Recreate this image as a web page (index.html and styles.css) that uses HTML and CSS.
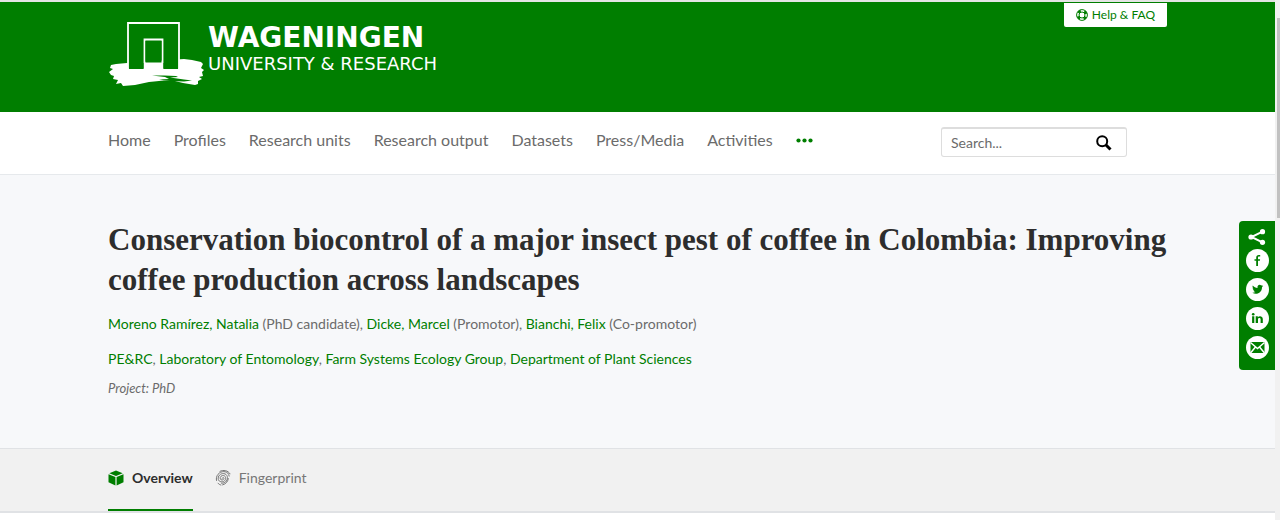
FILE: index.html
```html
<!DOCTYPE html>
<html lang="en">
<head>
<meta charset="utf-8">
<meta name="viewport" content="width=device-width, initial-scale=1">
<title>Conservation biocontrol of a major insect pest of coffee in Colombia</title>
<link rel="stylesheet" href="styles.css">
</head>
<body>
<div class="page">
  <header class="banner">
    <div class="container banner-inner">
      <a class="logo" href="#">
        <svg class="logo-mark" viewBox="0 0 92 67" aria-hidden="true">
          <path fill="#fff" d="M19 42 8 43l-5 1-1 3 3 1-4 3 2 3 3 1-1 3 5 1-2 4 5-1 2 3 12-1 14-3c10-1 18-2 26-1l8 2 12 2 3-1 0-3 4-2-3-2 4-1-1-4 2-2-3-2 2-4-2-2-9-2-8-1Z"/>
          <path fill="#007e00" stroke="#fff" stroke-width="1.800" d="M20 48.500V2h51v46.500H54.500V18.500H36.500v30Z"/>
          <path fill="#007e00" d="M21 42h14.500v6H21zM55.500 42H70v6H55.500zM37.500 20h16v21.500H37.500z"/>
          <path fill="#007e00" d="M44 54.500h12l12 .5 2 1-8 .5 14 2 8 1-8 1-14-.5-11-1.500 10-.5-4-2Z"/>
        </svg>
        <span class="logo-text">
          <span class="logo-name">WAGENINGEN</span>
          <span class="logo-sub">UNIVERSITY &amp; RESEARCH</span>
        </span>
      </a>
      <a class="help" href="#">
        <svg width="12" height="12" viewBox="0 0 12 12" fill="none" stroke="#007e00" aria-hidden="true"><circle cx="6" cy="6" r="5.4"/><circle cx="6" cy="6" r="3"/><circle cx="6" cy="6" r="4.3" stroke-width="2.4" stroke-dasharray="3 3.75" stroke-dashoffset="-1.9"/></svg>
        Help &amp; FAQ
      </a>
    </div>
  </header>
  <div class="mainbar">
    <div class="container mainbar-inner">
      <nav class="nav" aria-label="Main">
        <a href="#">Home</a><a href="#">Profiles</a><a href="#">Research units</a><a href="#">Research output</a><a href="#">Datasets</a><a href="#">Press/Media</a><a href="#">Activities</a>
        <button class="more" type="button" aria-label="More"><svg width="17" height="5" viewBox="0 0 17 5" fill="#007e00"><circle cx="2.5" cy="2.5" r="2.1"/><circle cx="8.5" cy="2.5" r="2.1"/><circle cx="14.5" cy="2.5" r="2.1"/></svg></button>
      </nav>
      <form class="search" role="search">
        <input type="text" placeholder="Search..." aria-label="Search">
        <button type="button" aria-label="Submit search"><svg width="16" height="16" viewBox="0 0 16 16" fill="none" stroke="#000"><circle cx="6.2" cy="6.2" r="5" stroke-width="2"/><path d="m10 10 4.5 4.5" stroke-width="3"/></svg></button>
      </form>
    </div>
  </div>
  <main class="hero">
    <div class="container">
      <h1>Conservation biocontrol of a major insect pest of coffee in Colombia: Improving coffee production across landscapes</h1>
      <p class="people"><a href="#">Moreno Ramírez, Natalia</a> (PhD candidate), <a href="#">Dicke, Marcel</a> (Promotor), <a href="#">Bianchi, Felix</a> (Co-promotor)</p>
      <p class="units"><a href="#">PE&amp;RC</a>, <a href="#">Laboratory of Entomology</a>, <a href="#">Farm Systems Ecology Group</a>, <a href="#">Department of Plant Sciences</a></p>
      <p class="kind">Project: PhD</p>
    </div>
  </main>
  <div class="tabbar">
    <nav class="container tabs" aria-label="Sections">
      <a class="tab active" href="#"><svg width="16" height="16" viewBox="0 0 16 16" fill="#007e00" aria-hidden="true"><path d="m8 .5 6.7 2.7L8 6 1.3 3.200Z"/><path d="m.5 4.200 6.900 2.900v8.400L.5 12.300ZM15.500 4.200 8.600 7.100v8.400l6.900-3.200Z"/></svg>Overview</a>
      <a class="tab" href="#"><svg width="16" height="16" viewBox="0 0 16 16" fill="none" stroke="#777" stroke-linecap="round" aria-hidden="true"><path d="M7.200 8.300c.2-1.300 2-1 1.700.3-.3 1.600-2.900 2.100-3.600.3-.7-2.100 1.500-3.900 3.500-3.300 2.500.7 2.300 3.800.7 5.200-2.100 1.800-5.500 1.200-6.200-1.400-.8-3.400 2.300-6.200 5.500-5.800 3.900.5 4.600 4.800 2.500 7.500-1.100 1.500-2.900 2.300-4.800 2.100M1.500 10.500C.3 5.800 4.300 1.500 8.900 1.600c3.300.1 5.100 2 5.300 4.500M13.300 8.500c-.1 2.600-2.300 5.700-5.700 6.400M3 13.200c.8 1 1.700 1.500 2.900 1.800M5 1.300C8.500-.5 13 .4 15 3.800"/></svg>Fingerprint</a>
    </nav>
  </div>
</div>
<aside class="share" aria-label="Share">
  <svg class="share-icon" width="18" height="16" viewBox="0 0 18 16" aria-hidden="true"><path d="M14.500 2.700 3.500 8l11 5.300" fill="none" stroke="#fff" stroke-width="2"/><g fill="#fff"><circle cx="14.500" cy="2.700" r="2.600"/><circle cx="3" cy="8" r="2.600"/><circle cx="14.500" cy="13.300" r="2.600"/></g></svg>
  <a href="#" aria-label="Facebook"><svg viewBox="0 0 23 23"><path fill="#007e00" d="M10.200 17v-5.200H8.500v-1.600h1.700V8.600c0-1.900 1-2.700 2.500-2.700h1.500v1.700H13c-.8 0-1 .3-1 1v1.600h2.100l-.2 1.600H12V17Z"/></svg></a>
  <a href="#" aria-label="Twitter"><svg viewBox="0 0 23 23"><path fill="#007e00" d="M6.800 7.500c1.200 1.500 2.800 2.300 4.700 2.400-.4-3 2.300-3.900 3.800-2.500l1.500-.5-.9 1.300 1.300-.3-1.200 1.300c.2 4.700-4.700 8.300-9.700 5.600 1.300.1 2.200-.2 3.100-.8-1-.1-1.700-.6-2-1.500h.9c-1-.4-1.600-1.100-1.600-2.200l.9.300C6.500 9.700 6.300 8.500 6.800 7.500Z"/></svg></a>
  <a href="#" aria-label="LinkedIn"><svg viewBox="0 0 23 23" fill="#007e00"><circle cx="7.200" cy="7.200" r="1.300"/><path d="M6.100 9.300h2.200V16H6.100ZM9.700 9.300h2.100v.9c1.200-1.700 5-1.400 5 1.700V16h-2.200v-3.700c0-1.900-2.600-1.700-2.600 0V16H9.700Z"/></svg></a>
  <a href="#" aria-label="Email"><svg viewBox="0 0 23 23"><path fill="#007e00" d="M4.500 6h14v11h-14z"/><path fill="none" stroke="#fff" stroke-width="1.500" d="m4.500 6.500 7 6 7-6M4.500 17l5-6M18.500 17l-5-6"/></svg></a>
</aside>
<div class="scrollbar" aria-hidden="true"></div>
</body>
</html>
```
FILE: styles.css
```css
* { box-sizing: border-box; }
body {
  margin: 0;
  display: flex;
  min-height: 100vh;
  background: #fff;
  color: #6b6b6b;
  font: 14px/20px Lato, "Noto Sans", sans-serif;
}
a { color: #007e00; text-decoration: none; }
button { border: 0; padding: 0; background: none; }
.page { flex: 1; min-width: 0; border-top: 2px solid #e4e4e4; }
.container { max-width: 1059px; margin: 0 auto; }
.banner { background: #007e00; }
.banner-inner { display: flex; justify-content: space-between; align-items: flex-start; min-height: 110px; }
.logo { display: flex; gap: 8px; padding-top: 19px; color: #fff; }
.logo-mark { width: 92px; height: 67px; overflow: visible; }
.logo-text { display: flex; flex-direction: column; gap: 2px; padding-top: 3px; font-family: "DejaVu Sans", sans-serif; white-space: nowrap; }
.logo-name { font-size: 28px; line-height: 28px; font-weight: bold; }
.logo-sub { font-size: 18px; line-height: 20px; }
.help {
  display: flex; align-items: center; gap: 4px;
  height: 24px; margin-top: 1px; padding: 0 12px;
  border-radius: 0 0 2px 2px;
  background: #fff; font-size: 12px;
}
.mainbar { border-bottom: 1px solid #e6e9ec; }
.mainbar-inner { display: flex; justify-content: space-between; align-items: center; min-height: 62px; padding: 0 40px 2px 0; }
.nav { display: flex; align-items: center; gap: 23px; padding-bottom: 4px; font-size: 16px; white-space: nowrap; }
.nav a { color: #6b6b6b; }
.more { display: flex; }
.search { display: flex; align-items: center; width: 186px; height: 30px; padding: 0 14px 0 9px; border: 1px solid #ddd; border-top-width: 2px; border-radius: 3px; }
.search input { flex: 1; min-width: 0; border: 0; padding: 0; outline: 0; font: inherit; background: none; color: #6b6b6b; }
.search input::placeholder { color: #6b6b6b; opacity: 1; }
.search button { display: flex; }
.hero { min-height: 273px; padding: 45px 0 50px; background: #f7f8fa; }
h1 { margin: 0; color: #2d2d2d; font: bold 31px/40px "Liberation Serif", serif; }
p { margin: 0; }
.people { margin-top: 14px; }
.units { margin-top: 15px; }
.kind { margin-top: 9px; font-size: 13px; font-style: italic; }
.tabbar { background: #f1f1f1; border-top: 1px solid #e0e2e5; border-bottom: 2px solid #e0e2e5; }
.tabs { display: flex; gap: 22px; }
.tab { display: flex; align-items: center; gap: 8px; height: 62px; padding-bottom: 2px; border-bottom: 2px solid transparent; color: #777; }
.active { border-color: #007e00; color: #2d2d2d; font-weight: bold; }
.share {
  position: fixed; right: 5px; top: 221px; z-index: 1;
  display: flex; flex-direction: column; align-items: center; gap: 6px;
  width: 36px; padding: 8px 0 11px;
  border-radius: 4px 0 0 4px; background: #007e00;
}
.share a { display: block; width: 23px; height: 23px; border-radius: 50%; background: #fff; }
.share-icon { margin-bottom: -2px; }
.share svg { display: block; }
.scrollbar { width: 5px; padding: 18px 0 0 2px; background: #f1f1f1; }
.scrollbar::before { content: ""; display: block; height: 200px; background: #c1c1c1; }
```
